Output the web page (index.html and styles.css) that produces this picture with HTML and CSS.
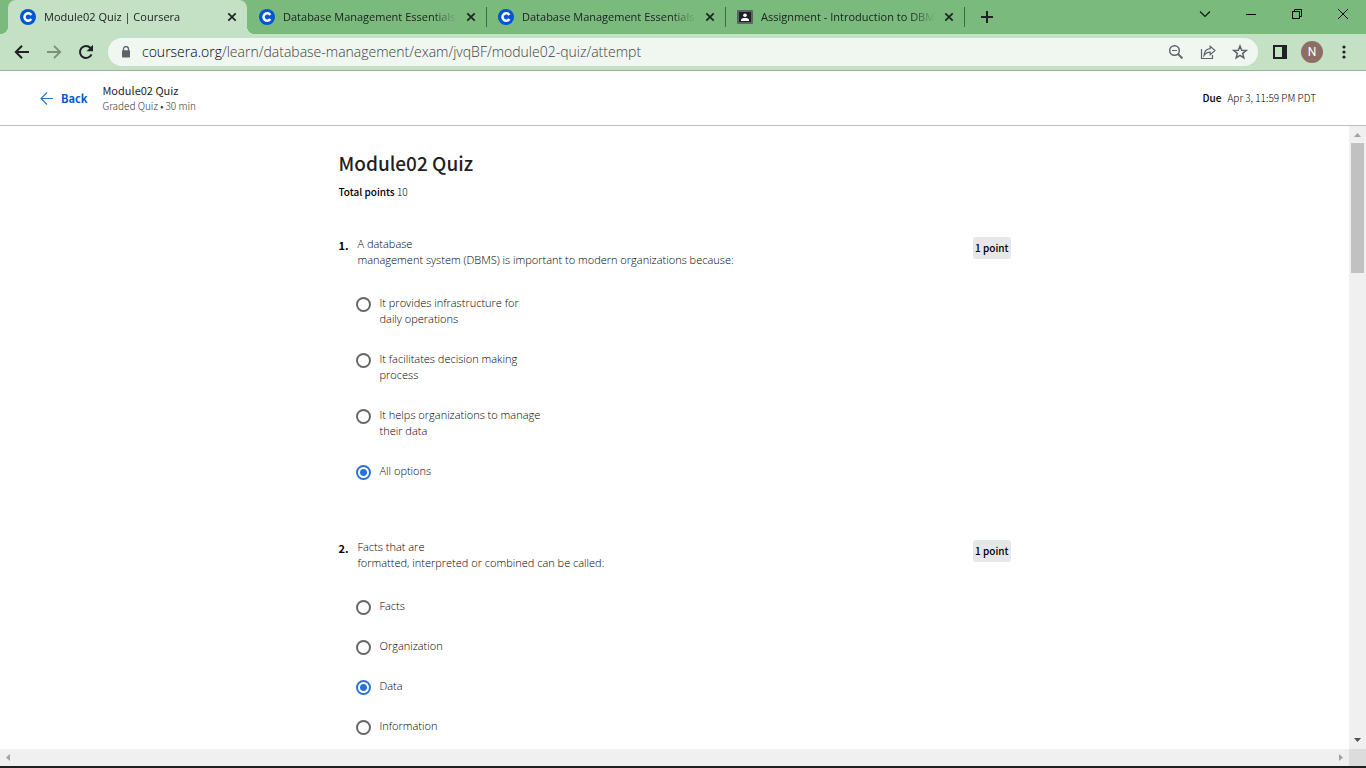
FILE: index.html
```html
<!DOCTYPE html>
<html lang="en">
<head>
<meta charset="utf-8">
<meta name="viewport" content="width=device-width, initial-scale=1">
<title>Module02 Quiz | Coursera</title>
<link rel="stylesheet" href="styles.css">
</head>
<body>
<svg class="symbols" aria-hidden="true">
  <symbol id="coursera" viewBox="0 0 16 16"><circle cx="8" cy="8" r="8" fill="#0056d2"/><path d="M11.3 6A3.700 3.700 0 1 0 11.3 10" fill="none" stroke="#fff" stroke-width="2.500"/></symbol>
  <symbol id="close" viewBox="0 0 16 16"><path d="M4.300 4.300l7.400 7.400M11.700 4.300l-7.400 7.400" fill="none" stroke="#202124" stroke-width="1.700"/></symbol>
</svg>

<nav class="tabstrip" aria-label="Tabs">
  <div class="tab tab-active">
    <svg class="favicon"><use href="#coursera"/></svg>
    <span class="tab-label">Module02 Quiz | Coursera</span>
    <button class="tab-close" aria-label="Close tab"><svg><use href="#close"/></svg></button>
  </div>
  <div class="tab">
    <svg class="favicon"><use href="#coursera"/></svg>
    <span class="tab-label">Database Management Essentials</span>
    <button class="tab-close" aria-label="Close tab"><svg><use href="#close"/></svg></button>
  </div>
  <div class="tab">
    <svg class="favicon"><use href="#coursera"/></svg>
    <span class="tab-label">Database Management Essentials</span>
    <button class="tab-close" aria-label="Close tab"><svg><use href="#close"/></svg></button>
  </div>
  <div class="tab">
    <svg class="favicon" viewBox="0 0 16 16"><rect y="1" width="16" height="14" rx="1" fill="#5f6368"/><rect x="2" y="3" width="12" height="10" fill="#202124"/><circle cx="8" cy="6.200" r="1.800" fill="#fff"/><path d="M4 12v-1.200C4 9.500 6 9 8 9s4 .5 4 1.800V12z" fill="#fff"/></svg>
    <span class="tab-label">Assignment - Introduction to DBM</span>
    <button class="tab-close" aria-label="Close tab"><svg><use href="#close"/></svg></button>
  </div>
  <button class="new-tab" aria-label="New tab"><svg width="12" height="12" viewBox="0 0 12 12"><path d="M6 0v12M0 6h12" stroke="#202124" stroke-width="2"/></svg></button>
  <div class="window-controls">
    <button aria-label="Search tabs"><svg width="12" height="12" viewBox="0 0 12 12"><path d="M1 3.500l5 5 5-5" fill="none" stroke="#111" stroke-width="1.100"/></svg></button>
    <button aria-label="Minimize"><svg width="10" height="10" viewBox="0 0 10 10"><path d="M0 5.500h10" stroke="#000"/></svg></button>
    <button aria-label="Restore"><svg width="10" height="10" viewBox="0 0 10 10"><path d="M.5 2.500h7v7h-7zM2.500 2.500v-2h7v7h-2" fill="none" stroke="#000"/></svg></button>
    <button aria-label="Close"><svg width="10" height="10" viewBox="0 0 10 10"><path d="M0 0l10 10M10 0L0 10" stroke="#000"/></svg></button>
  </div>
</nav>

<div class="toolbar">
  <button class="tool" aria-label="Back"><svg width="16" height="16" viewBox="0 0 16 16"><path d="M15 8H2.500M8 1.800L1.800 8 8 14.200" fill="none" stroke="#202124" stroke-width="2"/></svg></button>
  <button class="tool" aria-label="Forward"><svg width="16" height="16" viewBox="0 0 16 16"><path d="M1 8h12.500M8 1.800L14.200 8 8 14.200" fill="none" stroke="#7a907a" stroke-width="1.800"/></svg></button>
  <button class="tool" aria-label="Reload"><svg width="16" height="16" viewBox="0 0 16 16"><path d="M13.500 10.300A6 6 0 1 1 12.500 4L13 4.600" fill="none" stroke="#202124" stroke-width="2"/><path d="M15 .8v6.400H8.600z" fill="#202124"/></svg></button>
  <div class="omnibox">
    <svg class="lock" width="10" height="12" viewBox="0 0 10 12"><path d="M2.500 5V3a2.500 2.500 0 0 1 5 0v2" fill="none" stroke="#5f6368" stroke-width="1.300"/><rect x="1" y="4.200" width="8" height="7.300" rx=".8" fill="#5f6368"/></svg>
    <a class="url" href="#"><span class="host">coursera.org</span>/learn/database-management/exam/jvqBF/module02-quiz/attempt</a>
    <button class="tool" aria-label="Zoom"><svg width="16" height="16" viewBox="0 0 16 16"><circle cx="6.500" cy="6.500" r="4.800" fill="none" stroke="#5f6368" stroke-width="1.500"/><path d="M4 6.500h5" stroke="#5f6368"/><path d="M10 10l4.500 4.500" stroke="#5f6368" stroke-width="1.800"/></svg></button>
    <button class="tool" aria-label="Share"><svg width="16" height="16" viewBox="0 0 16 16"><path d="M1.500 5v9.500h11V11M4 11.500C4.300 7.500 6.500 5 10.200 4.700V2.300L15 6.500l-4.800 4.200V8.200C7.500 8.200 5.600 9.200 4 11.500z" fill="none" stroke="#5f6368" stroke-width="1.200"/></svg></button>
    <button class="tool" aria-label="Bookmark"><svg width="16" height="16" viewBox="0 0 16 16"><path d="M8 2l1.700 4.200 4.500.3-3.500 2.900 1.100 4.400L8 11.400l-3.800 2.400 1.100-4.400-3.500-2.900 4.500-.3z" fill="none" stroke="#5f6368" stroke-width="1.500"/></svg></button>
  </div>
  <button class="tool" aria-label="Side panel"><svg width="14" height="14" viewBox="0 0 14 14"><path d="M0 0h14v14H0zM2 2v10h7V2z" fill="#202124" fill-rule="evenodd"/></svg></button>
  <button class="tool" aria-label="Profile"><span class="avatar">N</span></button>
  <button class="tool" aria-label="Menu"><svg width="4" height="14" viewBox="0 0 4 14"><g fill="#202124"><circle cx="2" cy="2" r="1.600"/><circle cx="2" cy="7" r="1.600"/><circle cx="2" cy="12" r="1.600"/></g></svg></button>
</div>

<header class="quiz-header">
  <a class="back" href="#"><svg width="14" height="14" viewBox="0 0 14 14"><path d="M13 7.500H1M7 1.500l-6 6 6 6" fill="none" stroke="#2a6fd6" stroke-width="1.100"/></svg>Back</a>
  <div class="quiz-name">
    <div class="quiz-title">Module02 Quiz</div>
    <div class="quiz-meta">Graded Quiz • 30 min</div>
  </div>
  <div class="due"><strong>Due</strong><span>Apr 3, 11:59 PM PDT</span></div>
</header>

<div class="viewport">
  <main class="page">
    <div class="quiz">
      <h1>Module02 Quiz</h1>
      <p class="total"><strong>Total points</strong> 10</p>

      <section class="question" role="radiogroup" aria-labelledby="q1">
        <div class="prompt-row">
          <span class="number">1.</span>
          <p class="prompt" id="q1">A database<br>management system (DBMS) is important to modern organizations because:</p>
          <span class="points">1 point</span>
        </div>
        <div class="options">
          <label><input type="radio" name="q1"><span>It provides infrastructure for<br>daily operations</span></label>
          <label><input type="radio" name="q1"><span>It facilitates decision making<br>process</span></label>
          <label><input type="radio" name="q1"><span>It helps organizations to manage<br>their data</span></label>
          <label><input type="radio" name="q1" checked><span>All options</span></label>
        </div>
      </section>

      <section class="question" role="radiogroup" aria-labelledby="q2">
        <div class="prompt-row">
          <span class="number">2.</span>
          <p class="prompt" id="q2">Facts that are<br>formatted, interpreted or combined can be called:</p>
          <span class="points">1 point</span>
        </div>
        <div class="options">
          <label><input type="radio" name="q2"><span>Facts</span></label>
          <label><input type="radio" name="q2"><span>Organization</span></label>
          <label><input type="radio" name="q2" checked><span>Data</span></label>
          <label><input type="radio" name="q2"><span>Information</span></label>
        </div>
      </section>
    </div>
  </main>
  <div class="scroll-v" aria-hidden="true">
    <svg width="7" height="4" viewBox="0 0 7 4"><path d="M0 4h7L3.500 0z" fill="#a3a3a3"/></svg>
    <div class="track"><div class="thumb"></div></div>
    <svg width="7" height="4" viewBox="0 0 7 4"><path d="M0 0h7L3.500 4z" fill="#505050"/></svg>
  </div>
  <div class="scroll-h" aria-hidden="true">
    <svg width="4" height="7" viewBox="0 0 4 7"><path d="M4 0v7L0 3.500z" fill="#a3a3a3"/></svg>
    <svg width="4" height="7" viewBox="0 0 4 7"><path d="M0 0v7l4-3.500z" fill="#a3a3a3"/></svg>
  </div>
  <div class="corner"></div>
</div>
</body>
</html>
```
FILE: styles.css
```css
* { box-sizing: border-box; }

body {
  margin: 0;
  height: 100vh;
  display: flex;
  flex-direction: column;
  overflow: hidden;
  background: #fff;
  border-bottom: 2px solid #202022;
  color: #1f1f1f;
  font: 11px/16px "Open Sans", "Noto Sans", sans-serif;
}

button {
  border: 0;
  padding: 0;
  background: none;
  font: inherit;
  display: flex;
  align-items: center;
  justify-content: center;
}

p, h1 { margin: 0; }
a { text-decoration: none; }
.symbols { display: none; }

/* Tab strip */
.tabstrip {
  flex: none;
  height: 34px;
  display: flex;
  padding-left: 8px;
  background: #7abb7d;
}

.tab {
  flex: 0 1 239px;
  min-width: 0;
  display: flex;
  align-items: center;
  padding: 0 7px 0 12px;
  position: relative;
}

.tab:not(.tab-active)::after {
  content: "";
  position: absolute;
  right: -1px;
  top: 7px;
  width: 1px;
  height: 20px;
  background: #41684a;
}

.tab-active {
  background: #c5e1c5;
  border-radius: 8px 8px 0 0;
}

.tab-active::before,
.tab-active::after {
  content: "";
  position: absolute;
  bottom: 0;
  width: 8px;
  height: 8px;
}

.tab-active::before {
  right: 100%;
  background: radial-gradient(circle at 0 0, #7abb7d 8px, #c5e1c5 8px);
}

.tab-active::after {
  left: 100%;
  background: radial-gradient(circle at 100% 0, #7abb7d 8px, #c5e1c5 8px);
}

.favicon {
  flex: none;
  width: 16px;
  height: 16px;
  margin-right: 8px;
}

.tab-label {
  flex: 1;
  min-width: 0;
  overflow: hidden;
  white-space: nowrap;
  margin-right: 6px;
  font-size: 11px;
  color: #202124;
  mask-image: linear-gradient(to right, #000 calc(100% - 24px), transparent);
}

.tab-close { flex: none; }
.tab-close svg { width: 16px; height: 16px; }
.new-tab { width: 46px; }

.window-controls {
  margin-left: auto;
  height: 28px;
  display: flex;
}

.window-controls button { width: 46px; }

/* Toolbar */
.toolbar {
  flex: none;
  display: flex;
  align-items: center;
  padding: 4px 6px;
  background: #c5e1c5;
  border-bottom: 1px solid #9cb59c;
}

.tool {
  flex: none;
  width: 32px;
  height: 28px;
}

.omnibox {
  flex: 1;
  min-width: 0;
  display: flex;
  align-items: center;
  height: 28px;
  margin: 0 6px;
  padding: 0 2px 0 13px;
  border-radius: 14px;
  background: #f0f7f0;
}

.url {
  flex: 1;
  min-width: 0;
  overflow: hidden;
  white-space: nowrap;
  margin-left: 11px;
  font-size: 14px;
  font-weight: 300;
  line-height: 20px;
  color: #3c4043;
}

.host { color: #000; }

.avatar {
  width: 22px;
  height: 22px;
  border-radius: 50%;
  background: #8d6e63;
  color: #fff;
  font: 12px/22px Roboto, sans-serif;
  text-align: center;
}

/* Quiz header */
.quiz-header {
  flex: none;
  display: flex;
  align-items: center;
  padding: 11px 50px 11px 40px;
  border-bottom: 1px solid #bdbdbd;
  font-family: "Noto Sans CJK JP", sans-serif;
}

.back {
  display: flex;
  align-items: center;
  gap: 7px;
  color: #0056d2;
  font-size: 11px;
  font-weight: 700;
}

.quiz-name { margin-left: 15px; }
.quiz-title { font-size: 11px; }
.quiz-meta { font-size: 10px; font-weight: 300; color: #333; }

.due {
  margin-left: auto;
  display: flex;
  gap: 6px;
  font-size: 10px;
  font-weight: 300;
  color: #000;
}

.due strong { font-weight: 500; }

/* Page area with its scroll bars */
.viewport {
  flex: 1;
  min-height: 0;
  display: grid;
  grid-template: minmax(0, 1fr) 17px / minmax(0, 1fr) 17px;
}

.page { overflow: hidden; }

.scroll-v {
  display: flex;
  flex-direction: column;
  align-items: center;
  padding: 7px 0;
  background: #f0f0f0;
}

.track {
  flex: 1;
  width: 13px;
  margin: 6px 0;
}

.thumb {
  height: 22%;
  background: #c1c1c1;
}

.scroll-h {
  display: flex;
  align-items: center;
  justify-content: space-between;
  padding: 0 6px;
  background: #f0f0f0;
}

.corner { background: #dcdcdc; }

/* Quiz */
.quiz {
  max-width: 672px;
  margin: 0 auto;
  padding-top: 23px;
  font-weight: 300;
  color: #000;
}

h1 {
  font: 500 19px/28px "Noto Sans CJK JP", sans-serif;
  color: #1f1f1f;
}

.total {
  margin: 7px 0 36px;
  font: 300 10px/16px "Noto Sans CJK JP", sans-serif;
}

.total strong { font-weight: 500; }

.question { margin-bottom: 60px; }

.prompt-row {
  display: flex;
  align-items: flex-start;
}

.number {
  width: 19px;
  padding-top: 1px;
  font: 700 11px/16px "Noto Sans CJK JP", sans-serif;
}

.prompt { flex: 1; }

.points {
  margin-top: 1px;
  padding: 0 2px;
  border-radius: 3px;
  background: #e5e7e8;
  font: 500 10px/22px "Noto Sans CJK JP", sans-serif;
}

.options {
  display: flex;
  flex-direction: column;
  gap: 24px;
  margin-top: 27px;
  padding-left: 17px;
}

.options label {
  display: flex;
  align-items: flex-start;
  gap: 9px;
}

.options input {
  appearance: none;
  flex: none;
  width: 15px;
  height: 15px;
  margin: 2px 0 -1px;
  border: 2px solid #666;
  border-radius: 50%;
}

.options input:checked {
  border-color: #2a73d2;
  background: radial-gradient(circle, #2a73d2 3px, #fff 4px);
}
```
